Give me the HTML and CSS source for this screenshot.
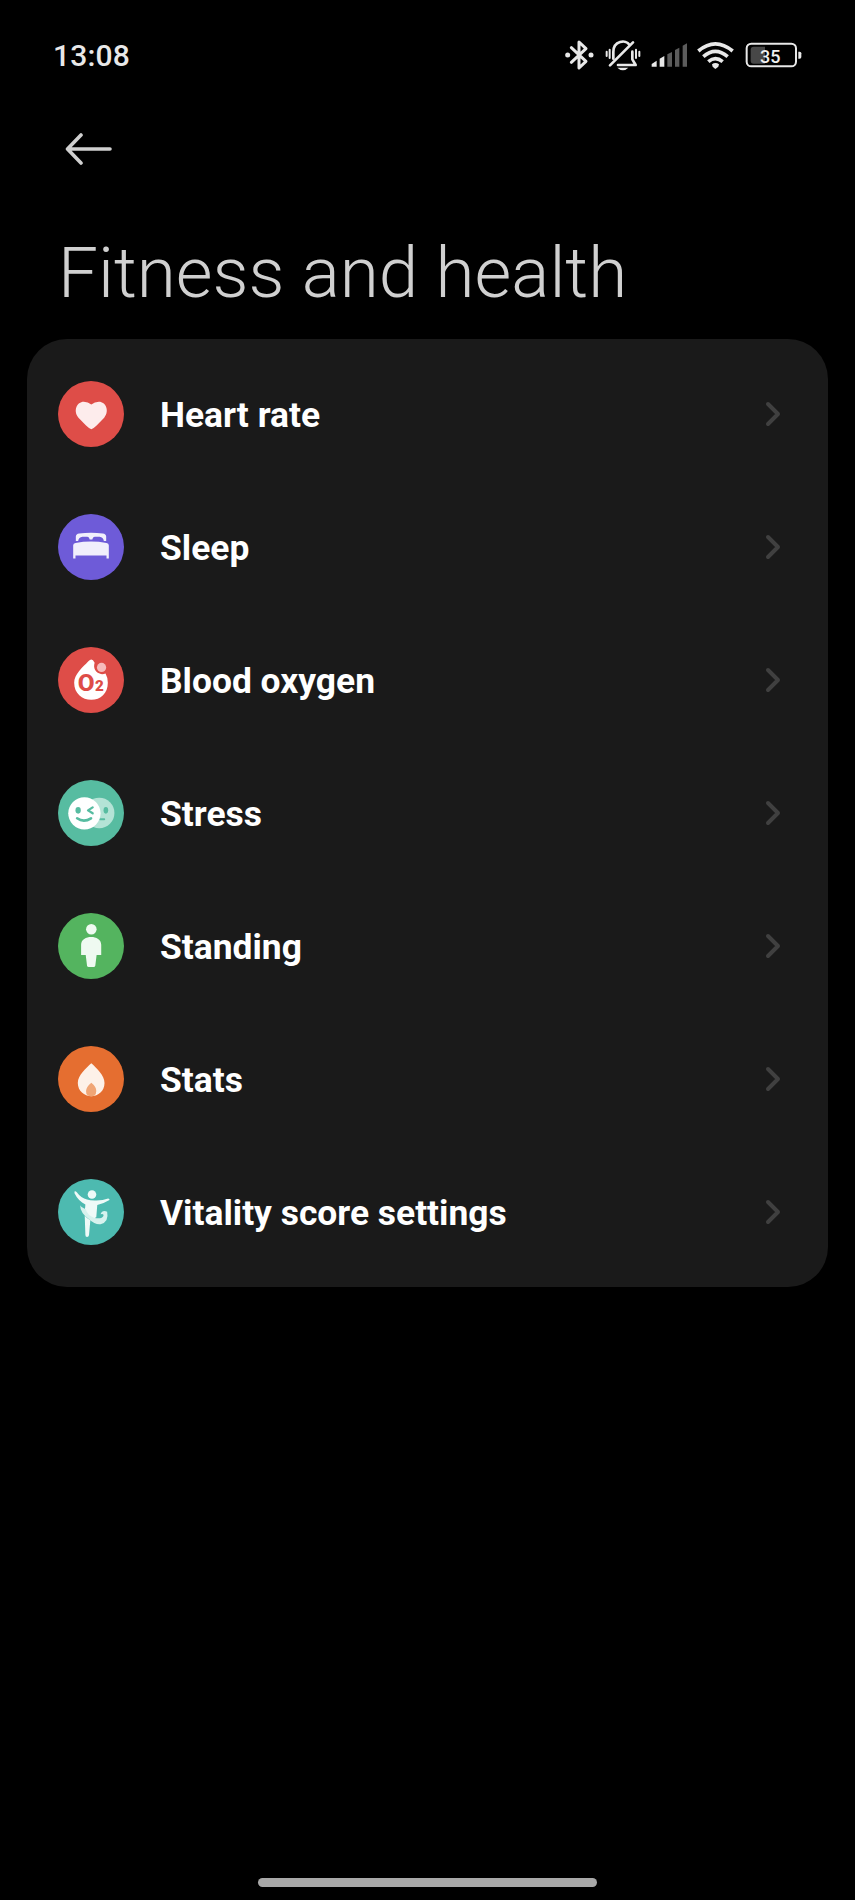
FILE: index.html
```html
<!DOCTYPE html>
<html lang="en">

<head>
    <meta charset="UTF-8">
    <meta name="viewport" content="width=device-width, initial-scale=1.0">
    <title>Fitness and health</title>
    <link rel="stylesheet" href="styles.css">
</head>

<body>

    <div class="statusbar">
        <span class="time">13:08</span>
        <div class="status-icons">
            <!-- bluetooth -->
            <svg width="30" height="34" viewBox="45 24 90 102">
                <path d="M64 53 L108 94 L87 114 V36 L108 56 L64 97" fill="none" stroke="#e8e8e8" stroke-width="9" stroke-linejoin="round" stroke-linecap="round"/>
                <circle cx="53" cy="75" r="7.5" fill="#e8e8e8"/>
                <circle cx="123" cy="75" r="7.5" fill="#e8e8e8"/>
            </svg>
            <!-- muted bell -->
            <svg width="36" height="34" viewBox="165 24 108 102">
                <g fill="none" stroke="#e8e8e8" stroke-linecap="round">
                    <path d="M190 86 V66 C190 32 228 28 238 44 M247 65 V88 L257 105 H204" stroke-width="8" stroke-linejoin="round"/>
                    <path d="M180 106 L249 37" stroke-width="8"/>
                    <path d="M170 65 V78 M179 59 V84 M258 59 V84 M268 65 V78" stroke-width="6"/>
                </g>
                <path d="M202 113 H235 Q219 129 202 113Z" fill="#e8e8e8"/>
            </svg>
            <!-- signal -->
            <svg width="36" height="34" viewBox="303 24 108 102">
                <path d="M305 102 L320 92 V110 H305Z M329 86 L343 78 V110 H329Z" fill="#e8e8e8"/>
                <path d="M352 73 L366 66 V110 H352Z M375 60 L388 53 V110 H375Z M398 47 L411 40 V110 H398Z" fill="#5c5c5c"/>
            </svg>
            <!-- wifi -->
            <svg width="38" height="34" viewBox="441 24 114 102">
                <g fill="none" stroke="#e8e8e8" stroke-width="11">
                    <path d="M445 63 Q496 20 548 63"/>
                    <path d="M460 80 Q496 48 533 80"/>
                    <path d="M475 95 Q496 77 518 95"/>
                </g>
                <path d="M486 103 Q496 95 507 103 L505 110 L496 117 L488 110Z" fill="#e8e8e8"/>
            </svg>
            <!-- battery -->
            <svg width="58" height="34" viewBox="585 24 174 102">
                <rect x="590" y="41" width="148" height="68" rx="14" fill="none" stroke="#e8e8e8" stroke-width="6"/>
                <path d="M611 50 H645 V101 H611 Q602 101 602 92 V59 Q602 50 611 50Z" fill="#474747"/>
                <path d="M745 65 H749 Q754 65 754 70 V81 Q754 86 749 86 H745Z" fill="#e8e8e8"/>
                <text x="630" y="98" class="battery-text">35</text>
            </svg>
        </div>
    </div>

    <div class="topbar">
        <svg class="back" width="48" height="32" viewBox="0 0 48 32">
            <path d="M17 2 L3.5 16 L17 30 M4 16 H46" fill="none" stroke="#d0d0d0" stroke-width="3.6" stroke-linecap="round" stroke-linejoin="round"/>
        </svg>
    </div>

    <h1>Fitness and health</h1>

    <div class="card">
        <div class="row">
            <svg class="icon red" viewBox="0 0 200 200">
                <path d="M101 146 Q94 144 85 135 L62 111 C45 91 57 63 78 63 Q91 63 101 71 Q111 63 124 63 C145 63 157 91 140 111 L117 135 Q108 144 101 146Z" fill="#fdecec"/>
            </svg>
            <span class="label">Heart rate</span>
            <svg class="chevron" viewBox="0 0 16 26"><path d="M3 3 L13 13 L3 23"/></svg>
        </div>
        <div class="row">
            <svg class="icon purple" viewBox="0 0 200 200">
                <g fill="#f1effc">
                    <path d="M54 82 V68 Q55 60 64 59 Q100 55 136 59 Q145 60 146 68 V82 H139 Q137 70 126 69 H111 Q105 69 104 77 H96 Q95 69 89 69 H74 Q63 70 61 82Z"/>
                    <path d="M46 135 V95 Q46 89 53 88 Q100 79 147 88 Q154 89 154 95 V135 H147 V126 H53 V135Z"/>
                </g>
            </svg>
            <span class="label">Sleep</span>
            <svg class="chevron" viewBox="0 0 16 26"><path d="M3 3 L13 13 L3 23"/></svg>
        </div>
        <div class="row">
            <svg class="icon red" viewBox="0 0 200 200">
                <path d="M101 38 Q106 38 111 48 C106 64 113 78 130 82 Q138 83 144 80 Q151 92 151 108 C151 140 129 160 101 160 C73 160 49 140 49 108 C49 83 74 62 92 43 Q97 38 101 38Z" fill="#fff"/>
                <circle cx="132" cy="62" r="14" fill="#f6bcbc"/>
                <text x="60" y="134" class="o2">O</text>
                <text x="112" y="134" class="o2 o2-small">2</text>
            </svg>
            <span class="label">Blood oxygen</span>
            <svg class="chevron" viewBox="0 0 16 26"><path d="M3 3 L13 13 L3 23"/></svg>
        </div>
        <div class="row">
            <svg class="icon teal" viewBox="0 0 200 200">
                <circle cx="125" cy="100" r="46" fill="#b4e3d6"/>
                <ellipse cx="145" cy="92" rx="7" ry="10" fill="#57bca1"/>
                <path d="M128 119 H140" stroke="#57bca1" stroke-width="6" stroke-linecap="round"/>
                <circle cx="80" cy="101" r="49" fill="#fff"/>
                <ellipse cx="61" cy="92" rx="8" ry="10" fill="#57bca1"/>
                <path d="M105 83 L91 92 L105 101" fill="none" stroke="#57bca1" stroke-width="7" stroke-linecap="round" stroke-linejoin="round"/>
                <path d="M58 116 Q78 130 100 116" fill="none" stroke="#57bca1" stroke-width="8" stroke-linecap="round"/>
            </svg>
            <span class="label">Stress</span>
            <svg class="chevron" viewBox="0 0 16 26"><path d="M3 3 L13 13 L3 23"/></svg>
        </div>
        <div class="row">
            <svg class="icon green" viewBox="0 0 200 200">
                <g fill="#effaf1">
                    <circle cx="101" cy="49" r="16"/>
                    <path d="M70 127 V96 C70 65 131 65 131 96 V127 H117 L113 160 Q112 164 108 164 H93 Q89 164 88 160 L84 127Z"/>
                </g>
            </svg>
            <span class="label">Standing</span>
            <svg class="chevron" viewBox="0 0 16 26"><path d="M3 3 L13 13 L3 23"/></svg>
        </div>
        <div class="row">
            <svg class="icon orange" viewBox="0 0 200 200">
                <path d="M101 52 C116 66 141 88 141 112 C141 136 122 152 101 152 C80 152 60 136 60 112 C60 88 86 66 101 52Z" fill="#fdf1e8"/>
                <path d="M101 111 Q116 123 116 136 Q116 147 110 151 Q101 153 91 151 Q84 146 85 136 Q86 123 101 111Z" fill="#f0a575"/>
            </svg>
            <span class="label">Stats</span>
            <svg class="chevron" viewBox="0 0 16 26"><path d="M3 3 L13 13 L3 23"/></svg>
        </div>
        <div class="row">
            <svg class="icon cyan" viewBox="0 0 200 200">
                <circle cx="103" cy="47" r="13" fill="#effaf8"/>
                <path d="M50 38 Q53 36 57 40 Q70 58 88 62 Q96 65 111 65 Q134 66 152 59 Q157 59 156 64 Q142 73 119 79 L116 116 Q106 122 96 116 Q78 104 83 77 C69 70 58 59 50 43Z" fill="#effaf8"/>
                <path d="M67 79 Q68 84 84 92 Q90 112 111 118 Q135 121 138 111 Q139 104 129 107 Q134 93 149 99 Q155 130 129 137 Q112 139 94 122 Q67 103 67 79Z" fill="#d7f2ee"/>
                <path d="M81 111 Q89 120 98 125 L94 170 Q93 176 88 176 Q83 176 83 170Z" fill="#effaf8"/>
            </svg>
            <span class="label">Vitality score settings</span>
            <svg class="chevron" viewBox="0 0 16 26"><path d="M3 3 L13 13 L3 23"/></svg>
        </div>
    </div>

    <div class="homebar"></div>

</body>

</html>
```
FILE: styles.css
```css
* {
    box-sizing: border-box;
}

body {
    margin: 0;
    height: 1900px;
    background-color: #000;
    font-family: Roboto, sans-serif;
    display: flex;
    flex-direction: column;
    overflow: hidden;
}

svg {
    display: block;
    flex-shrink: 0;
}

.statusbar {
    height: 110px;
    padding: 0 52px 0 53px;
    display: flex;
    align-items: center;
    justify-content: space-between;
}

.time {
    padding-top: 1px;
    color: #e8e8e8;
    font-size: 30px;
    font-weight: 500;
    letter-spacing: 0.2px;
}

.status-icons {
    display: flex;
    gap: 10px;
}

.battery-text {
    fill: #f0f0f0;
    font-size: 54px;
    font-weight: 500;
}

.topbar {
    height: 78px;
    padding: 23px 0 0 64px;
}

h1 {
    margin: 0;
    height: 151px;
    padding: 43px 0 0 58px;
    color: #d0d0d0;
    font-size: 71px;
    line-height: 84px;
    font-weight: 300;
    white-space: nowrap;
}

.card {
    margin: 0 27px;
    height: 948px;
    padding: 8px 47px 9px 31px;
    border-radius: 40px;
    background-color: #1a1a1a;
}

.row {
    height: 133px;
    display: flex;
    align-items: center;
}

.icon {
    width: 66px;
    height: 66px;
    border-radius: 50%;
}

.red {
    background-color: #de4d48;
}

.purple {
    background-color: #6e5bd8;
}

.teal {
    background-color: #57bca1;
}

.green {
    background-color: #54b45f;
}

.orange {
    background-color: #e56e30;
}

.cyan {
    background-color: #4dbab0;
}

.o2 {
    fill: #de4d48;
    font-size: 74px;
    font-weight: 800;
}

.o2-small {
    font-size: 46px;
    font-weight: 900;
}

.label {
    flex: 1;
    margin-left: 36px;
    padding-top: 2px;
    color: #fff;
    font-size: 35.4px;
    font-weight: 700;
}

.chevron {
    width: 16px;
    height: 26px;
}

.chevron path {
    fill: none;
    stroke: #404040;
    stroke-width: 4;
    stroke-linecap: round;
    stroke-linejoin: round;
}

.homebar {
    width: 339px;
    height: 9px;
    margin: auto 259px 13px 258px;
    border-radius: 5px;
    background-color: #a8a8a8;
}
```
